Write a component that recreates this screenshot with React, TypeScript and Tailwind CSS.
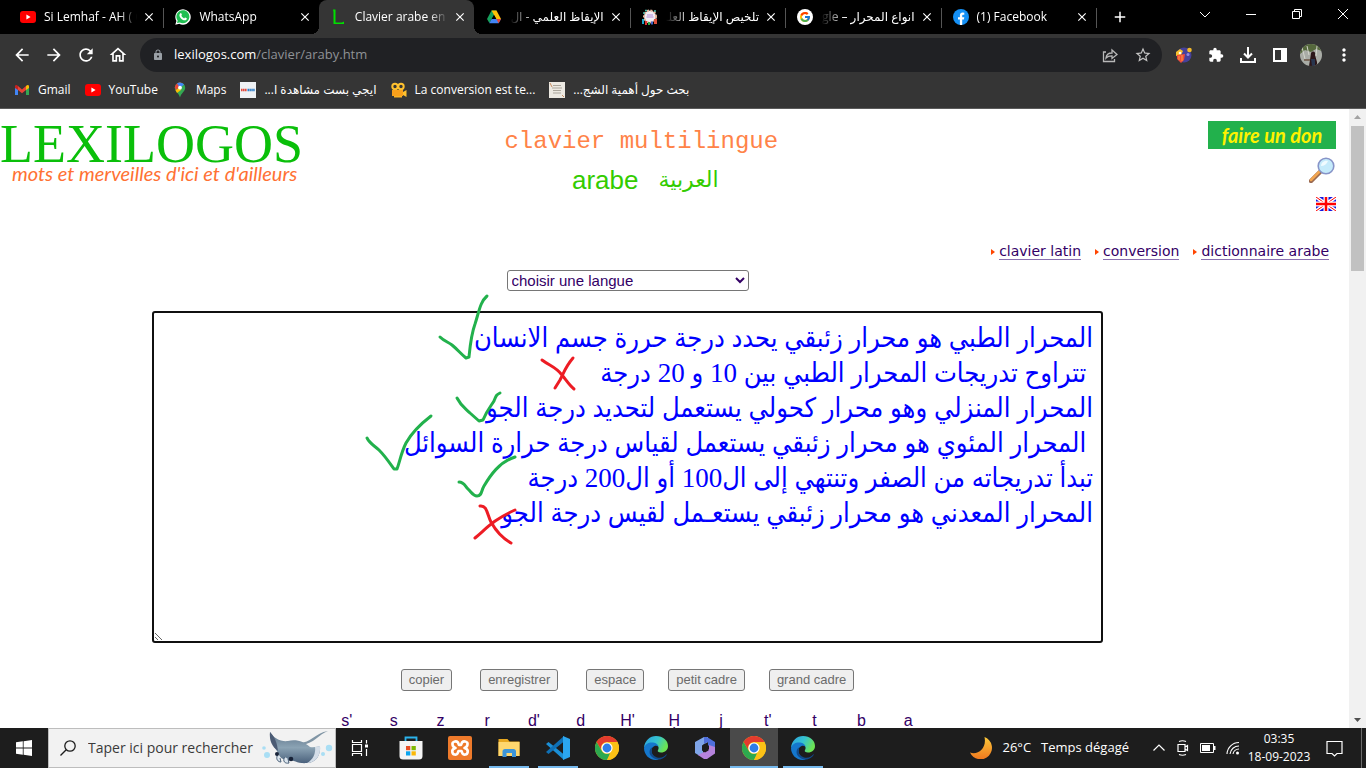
import React from "react";
import { MdArrowBack, MdArrowForward, MdRefresh, MdOutlineHome, MdLock, MdStarBorder, MdExtension, MdMoreVert, MdClose, MdAdd } from "react-icons/md";
import { FcGoogle } from "react-icons/fc";

const ui = "font-['Open_Sans','Noto_Sans','DejaVu_Sans',sans-serif]";

function YouTubeIcon() {
  return (
    <svg viewBox="0 0 16 16" className="size-4 shrink-0" aria-hidden="true">
      <rect x="0" y="2" width="16" height="12" rx="3" fill="#f00" />
      <path d="M6.400 5.500 10.600 8l-4.200 2.500z" fill="#fff" />
    </svg>
  );
}

function WhatsAppIcon() {
  return (
    <svg viewBox="0 0 16 16" className="size-4 shrink-0" aria-hidden="true">
      <path d="M.3 15.800 1.400 12A7.700 7.700 0 1 1 4.300 14.800z" fill="#fff" />
      <path d="M2 14.100 2.700 11.600A6.500 6.500 0 1 1 4.800 13.400z" fill="#1fbf52" />
      <path d="M5.400 4.200c.5-.3.8-.1 1 .4l.5 1.100c.1.4-.4.8-.6 1.100.7 1.200 1.500 2 2.800 2.600.4-.2.7-1 1.100-.9l1.500.8c.3.3 0 1.300-.6 1.700-1.700 1-4.100-.4-5.500-2C4.300 7.600 3.800 5.300 5.400 4.200z" fill="#fff" />
    </svg>
  );
}

function LexilogosIcon() {
  return (
    <svg viewBox="0 0 16 16" className="size-4 shrink-0" aria-hidden="true">
      <path d="M2 0.500h2.500v13h6.500l2-1v2.500H2.500V3z" fill="#00e000" />
    </svg>
  );
}

function DriveIcon() {
  return (
    <svg viewBox="0 0 16 16" className="size-4 shrink-0" aria-hidden="true">
      <path d="M5.500 1.500h5L8 5.800 3.400 14 1 10z" fill="#16a05c" />
      <path d="M5.500 1.500h5L15 10h-4.600z" fill="#ffc107" />
      <path d="M5.600 10H15l-2.400 4.200H3.300z" fill="#4285f4" />
      <path d="M12.600 14.200 15 10h-4.600z" fill="#e94235" />
      <path d="M8 6.200 10 10H6z" fill="#000" />
    </svg>
  );
}

function CrowdIcon() {
  return (
    <svg viewBox="0 0 16 16" className="size-4 shrink-0" aria-hidden="true">
      <circle cx="8" cy="7.500" r="6" fill="#f1eef6" stroke="#e8b9a0" strokeWidth="2" strokeDasharray="2 1.500" />
      <path d="M5 6h6M4.500 8h7" stroke="#b089d4" strokeWidth="1" />
      <rect x="0" y="10" width="2" height="5" fill="#19a7c9" />
      <rect x="3" y="12" width="2" height="4" fill="#d33" />
      <rect x="6" y="13" width="2" height="3" fill="#2aa84a" />
      <rect x="9" y="12.500" width="2" height="3" fill="#3e63c9" />
      <rect x="12" y="10" width="3" height="5" fill="#e0503a" />
      <path d="M1 4h2M12 2h2M3 1.500h2" stroke="#4ac0b0" strokeWidth="1.500" />
    </svg>
  );
}

function GoogleIcon() {
  return (
    <span className="flex size-4 shrink-0 items-center justify-center rounded-full bg-white">
      <FcGoogle className="size-3" />
    </span>
  );
}

function FacebookIcon() {
  return (
    <svg viewBox="0 0 16 16" className="size-4 shrink-0" aria-hidden="true">
      <circle cx="8" cy="8" r="8" fill="#1490f5" />
      <path d="M6.900 16v-5.500H5V8.200h1.900V6.600c0-2 1-3 2.800-3l1.600.2v1.900H10.200c-.8 0-1 .5-1 1.100v1.400h2.100l-.4 2.300H9.200V16z" fill="#fff" />
    </svg>
  );
}

type Tab = { title: string; icon: React.ReactNode; rtl?: boolean; active?: boolean; divider?: boolean };

const tabs: Tab[] = [
  { title: "Si Lemhaf - AH ( C", icon: <YouTubeIcon />, divider: true },
  { title: "WhatsApp", icon: <WhatsAppIcon /> },
  { title: "Clavier arabe en li", icon: <LexilogosIcon />, active: true },
  { title: "الإيقاظ العلمي - ال", icon: <DriveIcon />, rtl: true, divider: true },
  { title: "تلخيص الإيقاظ العلـ", icon: <CrowdIcon />, rtl: true, divider: true },
  { title: "انواع المحرار – Google", icon: <GoogleIcon />, rtl: true, divider: true },
  { title: "(1) Facebook", icon: <FacebookIcon />, divider: true },
];

function TabItem({ tab }: { tab: Tab }) {
  return (
    <div className={`relative flex h-full min-w-0 flex-1 items-center gap-2 pr-1.5 pl-3 ${tab.active ? "rounded-t-lg bg-[#353535]" : ""}`}>
      {tab.active && (
        <>
          <span className="absolute bottom-0 -left-2 size-2 bg-[radial-gradient(circle_at_0_0,transparent_8px,#353535_8px)]" />
          <span className="absolute -right-2 bottom-0 size-2 bg-[radial-gradient(circle_at_100%_0,transparent_8px,#353535_8px)]" />
        </>
      )}
      {tab.icon}
      <span
        dir={tab.rtl ? "rtl" : "ltr"}
        className={`min-w-0 flex-1 overflow-hidden text-xs whitespace-nowrap ${
          tab.rtl
            ? "[mask-image:linear-gradient(to_left,black_75%,transparent)]"
            : "[mask-image:linear-gradient(to_right,black_80%,transparent)]"
        }`}
      >
        {tab.title}
      </span>
      <button aria-label={`Fermer ${tab.title}`} className="-ml-1 flex size-4 shrink-0 items-center justify-center">
        <MdClose className="size-[14px]" />
      </button>
      {tab.divider && <span className="absolute top-2 -right-px h-5 w-px bg-[#555]" />}
    </div>
  );
}

function WindowButtons() {
  const items: [string, string][] = [
    ["Rechercher dans les onglets", "M1 4l5 5 5-5"],
    ["Réduire", "M1 6.500h10"],
    ["Restaurer", "M1.500 3.500h7v7h-7zM3.500 3.500v-2h7v7h-2"],
    ["Fermer", "M1 1l10 10M11 1 1 11"],
  ];
  return (
    <div className="ml-auto flex h-7">
      {items.map(([label, d]) => (
        <button key={label} aria-label={label} className="flex w-[46px] items-center justify-center">
          <svg viewBox="0 0 12 12" className="size-3" fill="none" stroke="#fff" strokeWidth="1">
            <path d={d} />
          </svg>
        </button>
      ))}
    </div>
  );
}

function Toolbar() {
  return (
    <div className="flex h-[42px] shrink-0 items-center bg-[#353535] pr-3 pl-3">
      <div className="flex w-32 items-center gap-3">
        <button aria-label="Précédent"><MdArrowBack className="size-5" /></button>
        <button aria-label="Suivant"><MdArrowForward className="size-5" /></button>
        <button aria-label="Actualiser"><MdRefresh className="size-5" /></button>
        <button aria-label="Accueil"><MdOutlineHome className="size-5" /></button>
      </div>
      <div className="flex h-[34px] min-w-0 flex-1 items-center rounded-full bg-[#202124] pr-2.5 pl-3">
        <MdLock className="size-3 text-[#9aa0a6]" />
        <div className="ml-2.5 flex-1 text-[13px]">
          <span className="text-white">lexilogos.com</span>
          <span className="text-[#8f9296]">/clavier/araby.htm</span>
        </div>
        <button aria-label="Partager" className="mr-4">
          <svg viewBox="0 0 16 16" className="size-4" fill="none" stroke="#b8b8b8" strokeWidth="1.300">
            <path d="M4 5H1.500v9.500h11V12M4 11c.3-3.500 2.500-5 6-5V3l5 4.500-5 4V8.800C7.500 8.800 5.500 9.200 4 11z" />
          </svg>
        </button>
        <button aria-label="Ajouter aux favoris"><MdStarBorder className="size-[18px] text-[#c4c4c4]" /></button>
      </div>
      <div className="ml-3.5 flex items-center gap-4">
        <button aria-label="Extension">
          <svg viewBox="0 0 16 16" className="size-4">
            <circle cx="8" cy="8" r="7.500" fill="#46419a" />
            <path d="M0 5l4-3 3 2-2 4-5 1z" fill="#f6c12d" />
            <path d="M1 8l8-1-1 6-3 3-4-4z" fill="#ef4b3a" />
            <path d="M3 9v4M6 8v6" stroke="#f9a13a" />
            <circle cx="13.500" cy="3" r="2.300" fill="#f4b92a" />
            <circle cx="4" cy="6" r="1.300" fill="#fff" />
            <circle cx="12" cy="7.500" r="1.500" fill="#8f8ae0" />
          </svg>
        </button>
        <button aria-label="Extensions"><MdExtension className="size-4" /></button>
        <button aria-label="Téléchargements">
          <svg viewBox="0 0 16 16" className="size-4" fill="none" stroke="#fff" strokeWidth="2">
            <path d="M8 0v10M4 6.500l4 4 4-4M1 11v4h14v-4" />
          </svg>
        </button>
        <button aria-label="Panneau latéral">
          <svg viewBox="0 0 16 16" className="size-4">
            <path d="M1 1h14v14H1zM3 3v10h6V3z" fill="#fff" fillRule="evenodd" />
          </svg>
        </button>
        <button aria-label="Profil" className="-ml-1">
          <svg viewBox="0 0 22 22" className="size-[22px]">
            <defs><clipPath id="avatar"><circle cx="11" cy="11" r="11" /></clipPath></defs>
            <g clipPath="url(#avatar)">
              <rect width="22" height="22" fill="#a9aca6" />
              <path d="M0 0h22v7l-6-2-5 3-6-2-5 4z" fill="#55683c" />
              <path d="M2 3l3 12M7 2l2 9M17 2l-1 10" stroke="#d4d6cd" />
              <path d="M11 9c2-3 5-1 4 2l2 7v4H9l1-6z" fill="#2b1518" />
              <path d="M4 15h6v2H4z" fill="#7b6a5c" />
              <path d="M11 15h4v7h-3z" fill="#28354e" />
            </g>
          </svg>
        </button>
        <button aria-label="Menu" className="-ml-1"><MdMoreVert className="size-5" /></button>
      </div>
    </div>
  );
}

function Bookmarks() {
  const items: { label: string; icon: React.ReactNode; rtl?: boolean }[] = [
    {
      label: "Gmail",
      icon: (
        <svg viewBox="0 0 16 16" className="size-4">
          <path d="M1 4v9h3V6z" fill="#4285f4" />
          <path d="M15 4v9h-3V6z" fill="#34a853" />
          <path d="M4 4l4 3.500L12 4v4l-4 3.300L4 8z" fill="#ea4335" />
          <path d="M1 4.500C1 2.700 2.700 2.500 4 4v4L1 6z" fill="#c5221f" />
          <path d="M15 4.500c0-1.800-1.700-2-3-.5v4l3-2z" fill="#fbbc04" />
        </svg>
      ),
    },
    { label: "YouTube", icon: <YouTubeIcon /> },
    {
      label: "Maps",
      icon: (
        <svg viewBox="0 0 16 16" className="size-4">
          <path d="M8 .5a5.200 5.200 0 0 1 5.200 5.200c0 4-4 5-5.200 9.800-1.200-4.800-5.200-5.800-5.200-9.800A5.200 5.200 0 0 1 8 .5z" fill="#34a853" />
          <path d="M4 2.400A5.200 5.200 0 0 1 9.600.8L4.200 8.500A5 5 0 0 1 4 2.400z" fill="#ea4335" />
          <path d="M5 1.500A5.200 5.200 0 0 1 12 2.500L8 6z" fill="#4285f4" />
          <path d="M3.500 8.300 8 5l1 3-4 3z" fill="#fbbc04" />
          <circle cx="8" cy="5.700" r="1.900" fill="#fff" />
        </svg>
      ),
    },
    {
      label: "ايجي بست مشاهدة ا...",
      rtl: true,
      icon: (
        <svg viewBox="0 0 16 16" className="size-4">
          <rect width="16" height="16" fill="#eef1f4" />
          <path d="M1 8h6" stroke="#e0483b" strokeWidth="2.500" strokeDasharray="1.500 .4" />
          <path d="M7.500 8H15" stroke="#2f7fc8" strokeWidth="2.500" strokeDasharray="1.500 .4" />
        </svg>
      ),
    },
    {
      label: "La conversion est te...",
      icon: (
        <svg viewBox="0 0 16 16" className="size-4">
          <circle cx="4" cy="4.500" r="2.700" fill="none" stroke="#ffc12e" strokeWidth="2" />
          <circle cx="10" cy="4.500" r="2.700" fill="none" stroke="#ffc12e" strokeWidth="2" />
          <path d="M1 8h11v6H1z" fill="#f9a01b" />
          <path d="M12 10l3.500-2v7L12 13z" fill="#ffc12e" />
          <path d="M3 14h8v1.500H3z" fill="#fbb324" />
        </svg>
      ),
    },
    {
      label: "بحث حول أهمية الشج...",
      rtl: true,
      icon: (
        <svg viewBox="0 0 16 16" className="size-4">
          <rect width="16" height="16" fill="#ece9e2" />
          <path d="M4 3.500h8M3 6h10M4 8.500h8M4 11h8" stroke="#aaa59b" />
          <path d="M1 1l2 4M13 13l2 2" stroke="#c98d5f" />
        </svg>
      ),
    },
  ];
  return (
    <nav className="flex h-[33px] shrink-0 items-center gap-3.5 border-b border-[#5b5b5b] bg-[#353535] pb-1 pl-3.5 text-xs">
      {items.map((b) => (
        <a key={b.label} href="#" className="flex items-center gap-2">
          {b.icon}
          <span dir={b.rtl ? "rtl" : "ltr"} className="whitespace-nowrap">{b.label}</span>
        </a>
      ))}
    </nav>
  );
}

const initialText = [
  "المحرار الطبي هو محرار زئبقي يحدد درجة حررة جسم الانسان",
  " تتراوح تدريجات المحرار الطبي بين 10 و 20 درجة",
  "المحرار المنزلي وهو محرار كحولي يستعمل لتحديد درجة الجو",
  " المحرار المئوي هو محرار زئبقي يستعمل لقياس درجة حرارة السوائل",
  "تبدأ تدريجاته من الصفر وتنتهي إلى ال100 أو ال200 درجة",
  "المحرار المعدني هو محرار زئبقي يستعـمل لقيس درجة الجو",
].join("\n");

function PenMarks() {
  return (
    <svg
      viewBox="152 311 951 332"
      preserveAspectRatio="xMinYMin meet"
      className="pointer-events-none absolute inset-0 h-full w-full overflow-visible"
      fill="none"
      strokeWidth="3"
      strokeLinecap="round"
      strokeLinejoin="round"
      aria-hidden="true"
    >
      <g stroke="#22b14c">
        <path d="M440 337c4 4 8 5 12 8 6 5 8 8 14 13l3-1c1-10 2-22 6-33 4-12 5-22 12-28" />
        <path d="M457 398c4 8 8 10 13 15l9 8 4-1c4-10 8-14 11-19 2-5 2-6 6-8" />
        <path d="M367 438c3 6 8 8 12 12 6 6 10 12 15 19l3 0c3-8 4-16 9-26 5-9 12-17 25-27" />
        <path d="M459 482c5 0 6 4 9 7 4 4 5 7 9 7 5 0 4-5 7-10 6-10 15-24 31-29" />
      </g>
      <g stroke="#ed1c24">
        <path d="M542 360c8 6 14 7 20 15 5 6 7 10 12 14M573 358c-7 8-9 14-13 22l-5 8" />
        <path d="M480 506c7-1 7 8 11 16 5 9 11 16 20 21M475 538c12-10 18-18 40-28" />
      </g>
    </svg>
  );
}

const letters = ["s'", "s", "z", "r", "d'", "d", "H'", "Ḥ", "j", "t'", "t", "b", "a"];

function Page() {
  return (
    <main className="min-w-0 flex-1 overflow-hidden bg-white font-['Liberation_Sans','DejaVu_Sans',sans-serif] text-[#330066]">
      <header className="grid h-[134px] grid-cols-[37%_22%_1fr] pt-3 pr-[13px]">
        <a href="#" className="flex flex-col whitespace-nowrap">
          <span className="mt-1 font-['Liberation_Serif',serif] text-[54px] leading-[38px] text-[#0abf0a]">LEXILOGOS</span>
          <span className="ml-3 font-['Lato',sans-serif] text-xl leading-5 text-[#ff7133] italic">mots et merveilles d'ici et d'ailleurs</span>
        </a>
        <div className="flex flex-col items-center whitespace-nowrap">
          <h2 className="font-['Liberation_Mono',monospace] text-2xl leading-[42px] text-[#ff8348]">clavier multilingue</h2>
          <h1 className="ml-2 flex gap-5 text-[26px] leading-[34px] text-[#33cc00]">
            <span>arabe</span>
            <span dir="rtl" className="text-[22px]">العربية</span>
          </h1>
        </div>
        <div className="flex flex-col items-end">
          <a href="#" className="flex h-7 w-32 items-center justify-center bg-[#22b14c] font-['Lato',sans-serif] text-xl font-bold text-[#fff200] italic">faire un don</a>
          <a href="#" aria-label="Rechercher" className="mt-2">
            <svg viewBox="0 0 27 26" className="h-[26px] w-[27px]">
              <path d="M2 24 11 15" stroke="#9a6a52" strokeWidth="4.500" strokeLinecap="round" />
              <path d="M2 23 10 15" stroke="#f2a650" strokeWidth="2.500" strokeLinecap="round" />
              <circle cx="17" cy="9" r="7.800" fill="#c5ebfb" stroke="#8794c8" strokeWidth="1.600" />
              <path d="M12 9c0-3 3-6 7-5-1 3-4 5-7 5z" fill="#f0fbff" />
            </svg>
          </a>
          <a href="#" aria-label="English" className="mt-3.5">
            <svg viewBox="0 0 20 14" className="h-3.5 w-5">
              <rect width="20" height="14" fill="#1414e0" />
              <path d="M0 0l20 14M20 0 0 14" stroke="#fff" strokeWidth="3.500" />
              <path d="M0 0l20 14M20 0 0 14" stroke="#f00" strokeWidth="1" />
              <path d="M10 0v14M0 7h20" stroke="#fff" strokeWidth="5" />
              <path d="M10 0v14M0 7h20" stroke="#f00" strokeWidth="2.500" />
            </svg>
          </a>
        </div>
      </header>

      <nav className="flex justify-end gap-3.5 pr-5 font-['DejaVu_Sans',sans-serif] text-sm leading-4">
        {["clavier latin", "conversion", "dictionnaire arabe"].map((l) => (
          <span key={l} className="flex items-center gap-1">
            <svg viewBox="0 0 4 6" className="h-1.5 w-1" aria-hidden="true"><path d="M0 0l4 3-4 3z" fill="#ff4500" /></svg>
            <a href="#" className="border-b border-[#8a70b0]">{l}</a>
          </span>
        ))}
      </nav>

      <div className="mr-[94px] flex flex-col items-center">
        <select aria-label="choisir une langue" className="mt-2.5 h-[21px] w-[242px] rounded-[3px] border border-[#767676] bg-white text-[15px] leading-4">
          <option>choisir une langue</option>
        </select>

        <div className="relative mt-5 w-[951px] max-w-full">
          <textarea
            dir="rtl"
            aria-label="Texte arabe"
            spellCheck={false}
            defaultValue={initialText}
            className="block h-[332px] w-full overflow-hidden rounded-[3px] border-2 border-[#101010] bg-white px-2 pt-2 font-['Liberation_Serif','DejaVu_Sans_Condensed','DejaVu_Sans',serif] text-[27px] leading-[35px] text-[#0000ff]"
          />
          <PenMarks />
        </div>

        <div className="mt-[26px] flex gap-6 text-[13px] leading-4">
          {["copier", "enregistrer", "espace", "petit cadre", "grand cadre"].map((b, i) => (
            <button key={b} className={`rounded-[3px] border border-[#767676] bg-[#efefef] px-[7px] py-0.5 text-[#6b6b6b] ${i < 2 ? "mr-1" : ""}`}>{b}</button>
          ))}
        </div>

        <div className="mt-5 grid w-[608px] grid-cols-13 text-center text-base leading-5">
          {letters.map((l) => (
            <button key={l}>{l}</button>
          ))}
        </div>
      </div>
    </main>
  );
}

function ScrollRail() {
  return (
    <div className="flex w-[17px] shrink-0 flex-col items-center bg-[#f1f1f1]" aria-hidden="true">
      <svg viewBox="0 0 17 17" className="size-[17px]"><path d="M5 10h7L8.500 6z" fill="#a3a3a3" /></svg>
      <div className="h-[145px] w-[13px] bg-[#c1c1c1]" />
      <svg viewBox="0 0 17 17" className="mt-auto size-[17px]"><path d="M5 7h7l-3.500 4z" fill="#505050" /></svg>
    </div>
  );
}

function ChromeIcon() {
  return (
    <svg viewBox="0 0 24 24" className="size-6">
      <circle cx="12" cy="12" r="12" fill="#fbc116" />
      <path d="M1.600 6A12 12 0 0 1 22.400 6H12a6 6 0 0 0-5.200 9z" fill="#e33b2e" />
      <path d="M1.600 6 6.800 15A6 6 0 0 0 12 18l3-.8L12 24A12 12 0 0 1 1.600 6z" fill="#2da94f" />
      <path d="M12 24l5.200-9a6 6 0 0 0-.4-6.600L16 6h6.400A12 12 0 0 1 12 24z" fill="#fbc116" />
      <circle cx="12" cy="12" r="5.600" fill="#fff" />
      <circle cx="12" cy="12" r="4.400" fill="#2f7de9" />
    </svg>
  );
}

function EdgeIcon({ id }: { id: string }) {
  return (
    <svg viewBox="0 0 24 24" className="size-6">
      <defs>
        <linearGradient id={id} x1="0" x2="1" y1="0" y2=".4">
          <stop offset="0" stopColor="#2b9fe0" />
          <stop offset=".55" stopColor="#35c3d0" />
          <stop offset="1" stopColor="#6be354" />
        </linearGradient>
      </defs>
      <path d="M0 12C.5 4.500 6 0 12 0c7 0 12 4.500 12 10 0 4-3 6.500-7 6.500-2.500 0-4-1-3-2.500 2-3-1-6-5-6-4.500 0-8 2-9 4z" fill={`url(#${id})`} />
      <path d="M0 12c1-3.500 4-5.500 8-5.500 3 0 6 1.500 6.500 4-4-2-7 1-7 4.500 0 4 3 7 7.500 8.500C6.500 25.500 0 19.500 0 12z" fill="#1577cc" />
      <path d="M9 11c-3 3-1.500 9 4 10.500 4 1 7.500-.5 9.500-3.500 1 .5-1.500 3.500-5 5-5 2-12-2-12-7 0-2.500 1.500-4.500 3.500-5z" fill="#114a8b" />
    </svg>
  );
}

const apps: { label: string; icon: React.ReactNode; state?: "open" | "active" }[] = [
  {
    label: "Microsoft Store",
    icon: (
      <svg viewBox="0 0 24 24" className="size-6">
        <path d="M6.500 6V1.500h11V6" fill="none" stroke="#2bb3ec" strokeWidth="1.800" />
        <path d="M.5 5h23v15a3.500 3.500 0 0 1-3.500 3.500H4A3.500 3.500 0 0 1 .5 20z" fill="#f4f4f4" />
        <path d="M7 10h4.300v4.200H7z" fill="#e74e25" />
        <path d="M12.500 10h4.300v4.200h-4.300z" fill="#7db802" />
        <path d="M7 15.300h4.300v4.200H7z" fill="#0aa4ee" />
        <path d="M12.500 15.300h4.300v4.200h-4.300z" fill="#fbb807" />
      </svg>
    ),
  },
  {
    label: "XAMPP",
    icon: (
      <svg viewBox="0 0 24 24" className="size-6">
        <rect width="24" height="24" rx="2" fill="#ee7a2b" />
        <g fill="none" stroke="#fff" strokeWidth="2.600" strokeLinecap="round" strokeLinejoin="round">
          <path d="M10 6.500c-2-2-6-1-5.500 2 .2 2 1.500 3 3 3.500-2 .5-3.500 2-3.200 4 .4 3 4 3.200 5.200 1.500l1-2.500h3l1 2.500c1.200 1.700 4.800 1.500 5.200-1.500.3-2-1.200-3.500-3.200-4 1.500-.5 2.800-1.500 3-3.500.5-3-3.500-4-5.500-2l-1 2.500h-2z" />
        </g>
      </svg>
    ),
  },
  {
    label: "Explorateur de fichiers",
    state: "open",
    icon: (
      <svg viewBox="0 0 24 24" className="size-6">
        <path d="M1.500 3h9l2 2.500h10V20h-21z" fill="#e8a820" />
        <path d="M1.500 6h21v14h-21z" fill="#ffd76e" />
        <path d="M5.500 21v-5.500c0-1.500 1-2.500 2.500-2.500h8.500c1.500 0 2.500 1 2.500 2.500V21h-4v-4H9.500v4z" fill="#3d95d8" />
      </svg>
    ),
  },
  {
    label: "Visual Studio Code",
    state: "open",
    icon: (
      <svg viewBox="0 0 24 24" className="size-6">
        <path d="M0 8 2.500 6 18 18.500V24z" fill="#1b8fd6" />
        <path d="M0 16 2.500 18 18 5.500V0z" fill="#0f70b5" />
        <path d="M17 0l7 3v18l-7 3z" fill="#2ba6ef" />
      </svg>
    ),
  },
  { label: "Google Chrome", icon: <ChromeIcon /> },
  { label: "Microsoft Edge", icon: <EdgeIcon id="edge-a" /> },
  {
    label: "Microsoft 365",
    icon: (
      <svg viewBox="0 0 24 24" className="size-6">
        <path d="M11 1 2 6v11l4 2.500L10 17V9l5-3V1z" fill="#7fa5e8" />
        <path d="M11 1h3l8 5v7l-7-3.500V6l-4 1.500z" fill="#4f6fdc" />
        <path d="M22 11v6.500L14 23h-3l-6-4 5-2.500 6-3.500V9z" fill="#b583dc" />
        <path d="M9 9.500 12 7.500l3.500 2v5L12 16.500 9 14.500z" fill="#1d1d1d" />
      </svg>
    ),
  },
  { label: "Google Chrome, fenêtre active", icon: <ChromeIcon />, state: "active" },
  { label: "Microsoft Edge, fenêtre ouverte", icon: <EdgeIcon id="edge-b" />, state: "open" },
];

function Manta() {
  return (
    <svg viewBox="0 0 72 36" className="mr-0.5 h-9 w-[72px]" aria-hidden="true">
      <defs>
        <linearGradient id="manta" x1="0" x2="0" y1="0" y2="1">
          <stop offset="0" stopColor="#5d7389" />
          <stop offset=".5" stopColor="#8ba3b4" />
          <stop offset="1" stopColor="#4a617c" />
        </linearGradient>
      </defs>
      <path d="M38 13C50 13 54 3 67 1c-9 3-14 13-27 14z" fill="#8095a5" />
      <path d="M9 2c3 6 11 10 18 9 9-2 16 1 22 6 5 1 8-1 10-1 1 9-4 17-13 17-9 1-13-3-18-3-6 0-9-2-11-7C14 17 8 11 9 2z" fill="url(#manta)" />
      <path d="M59 16c1 9-4 17-13 17 6-3 9-10 8-16z" fill="#d3dde8" />
      <path d="M9 2c-1 8 2 15 8 19-1-8-3-14-8-19z" fill="#4b5b74" />
      <path d="M17 24c-3 5 0 8 3 8l-1-4M24 27c-3 4 0 7 4 6l-1-4" fill="#dbe5ee" stroke="#4a6078" />
      <circle cx="16" cy="24" r="2" fill="#182338" />
      <circle cx="30" cy="29" r="2.300" fill="#182338" />
      <g fill="#a9def4">
        <circle cx="6" cy="25" r="3" />
        <circle cx="3" cy="18" r="1.800" />
        <circle cx="68" cy="18" r="3.200" />
        <circle cx="62" cy="24" r="2" />
      </g>
    </svg>
  );
}

function Taskbar() {
  return (
    <footer className="flex h-10 shrink-0 items-stretch bg-[#1d1d1d]">
      <button aria-label="Démarrer" className="flex w-12 items-center justify-center">
        <svg viewBox="0 0 16 16" className="size-4" fill="#fff">
          <path d="M0 2.200 6.800 1.300v6.300H0zM7.600 1.200 16 0v7.600H7.600zM0 8.400h6.800v6.300L0 13.800zM7.600 8.400H16V16l-8.400-1.200z" />
        </svg>
      </button>
      <label className="flex w-72 items-center border border-[#bdbdbd] bg-[#f2f2f2] pl-[11px] text-[#2b2b2b]">
        <svg viewBox="0 0 16 16" className="size-4 shrink-0" fill="none" stroke="#1d1d1d" strokeWidth="1.300">
          <circle cx="10" cy="6" r="5.200" />
          <path d="M6.200 9.800.5 15.500" />
        </svg>
        <input
          aria-label="Taper ici pour rechercher"
          placeholder="Taper ici pour rechercher"
          className="ml-3 min-w-0 flex-1 bg-transparent text-sm outline-none placeholder:text-[#3a3a3a]"
        />
        <Manta />
      </label>
      <button aria-label="Affichage des tâches" className="mr-[3px] flex w-12 items-center justify-center">
        <svg viewBox="0 0 18 18" className="size-[18px]" fill="none" stroke="#fff" strokeWidth="1.200">
          <path d="M1.500 5.500h9v7h-9zM1.500 1v2.500h9V1M1.500 17v-2.500h9V17M15.500 1v3.500M15.500 10v7" />
          <path d="M14 5.500h3v3h-3z" fill="#fff" stroke="none" />
        </svg>
      </button>
      <div className="flex gap-px">
        {apps.map((a) => (
          <button key={a.label} aria-label={a.label} className={`relative flex w-12 items-center justify-center ${a.state === "active" ? "bg-[#4a4a4a]" : ""}`}>
            {a.icon}
            {a.state && <span className={`absolute bottom-0 h-0.5 bg-[#76b9ed] ${a.state === "active" ? "inset-x-0" : "inset-x-1"}`} />}
          </button>
        ))}
      </div>
      <div className="ml-auto flex items-center text-white">
        <button className="flex items-center text-[13px]">
          <svg viewBox="0 0 22 22" className="mr-2.5 size-[22px]">
            <defs>
              <linearGradient id="moon" x1="0" x2="0" y1="0" y2="1">
                <stop offset="0" stopColor="#fcc93a" />
                <stop offset="1" stopColor="#f0781e" />
              </linearGradient>
            </defs>
            <path d="M14.500 0A11.500 11.500 0 1 1 0 15.500C8 18.500 17 11 14.500 0z" fill="url(#moon)" />
          </svg>
          <span className="mr-2.5">26°C</span>
          <span>Temps dégagé</span>
        </button>
        <div className="ml-[18px] flex items-center">
          <button aria-label="Icônes cachées" className="flex w-6 justify-center">
            <svg viewBox="0 0 12 12" className="size-3" fill="none" stroke="#fff" strokeWidth="1.200"><path d="M.5 8.500 6 3l5.500 5.500" /></svg>
          </button>
          <button aria-label="Réunion" className="flex w-6 justify-center">
            <svg viewBox="0 0 14 16" className="h-4 w-3.5" fill="none" stroke="#fff" strokeWidth="1.200"><path d="M2 4.500h7v7H2zM9 7l2.500-1.500v5L9 9M3 1.500q3.500-1.500 7 0M3 14.500q3.500 1.500 7 0" /></svg>
          </button>
          <button aria-label="Batterie" className="flex w-[26px] justify-center">
            <svg viewBox="0 0 16 10" className="h-2.5 w-4"><path d="M.5.5h13v9H.5z" fill="none" stroke="#fff" /><path d="M2 2h8v6H2zM14 3h1.500v4H14z" fill="#fff" /></svg>
          </button>
          <button aria-label="Réseau" className="flex w-6 justify-center">
            <svg viewBox="0 0 14 14" className="size-3.5" fill="none" stroke="#fff" strokeWidth="1.100"><path d="M1 13A12 12 0 0 1 13 1.500M4 13A9 9 0 0 1 13 5M7 13A6 6 0 0 1 13 8" /><circle cx="11.500" cy="12" r="1.500" fill="#fff" stroke="none" /></svg>
          </button>
        </div>
        <button className="w-[68px] text-center text-xs leading-[18px]">
          <time className="block">03:35</time>
          <time className="block whitespace-nowrap">18-09-2023</time>
        </button>
        <button aria-label="Notifications" className="flex w-[42px] justify-center">
          <svg viewBox="0 0 17 17" className="size-[17px]" fill="none" stroke="#fff" strokeWidth="1.200"><path d="M1 1.500h15v12h-5L8.500 16 6 13.500H1z" /></svg>
        </button>
        <span className="mr-1 ml-1.5 h-10 w-px bg-[#6b6b6b]" />
      </div>
    </footer>
  );
}

export default function App() {
  return (
    <div className={`flex h-screen flex-col overflow-hidden text-white ${ui}`}>
      <div className="flex h-[34px] shrink-0 bg-black pl-2">
        <div className="flex w-[1088px] min-w-0 shrink">
          {tabs.map((t) => (
            <TabItem key={t.title} tab={t} />
          ))}
        </div>
        <button aria-label="Nouvel onglet" className="ml-3.5 flex w-5 items-center justify-center"><MdAdd className="size-[18px]" /></button>
        <WindowButtons />
      </div>
      <Toolbar />
      <Bookmarks />
      <div className="flex min-h-0 flex-1">
        <Page />
        <ScrollRail />
      </div>
      <Taskbar />
    </div>
  );
}
